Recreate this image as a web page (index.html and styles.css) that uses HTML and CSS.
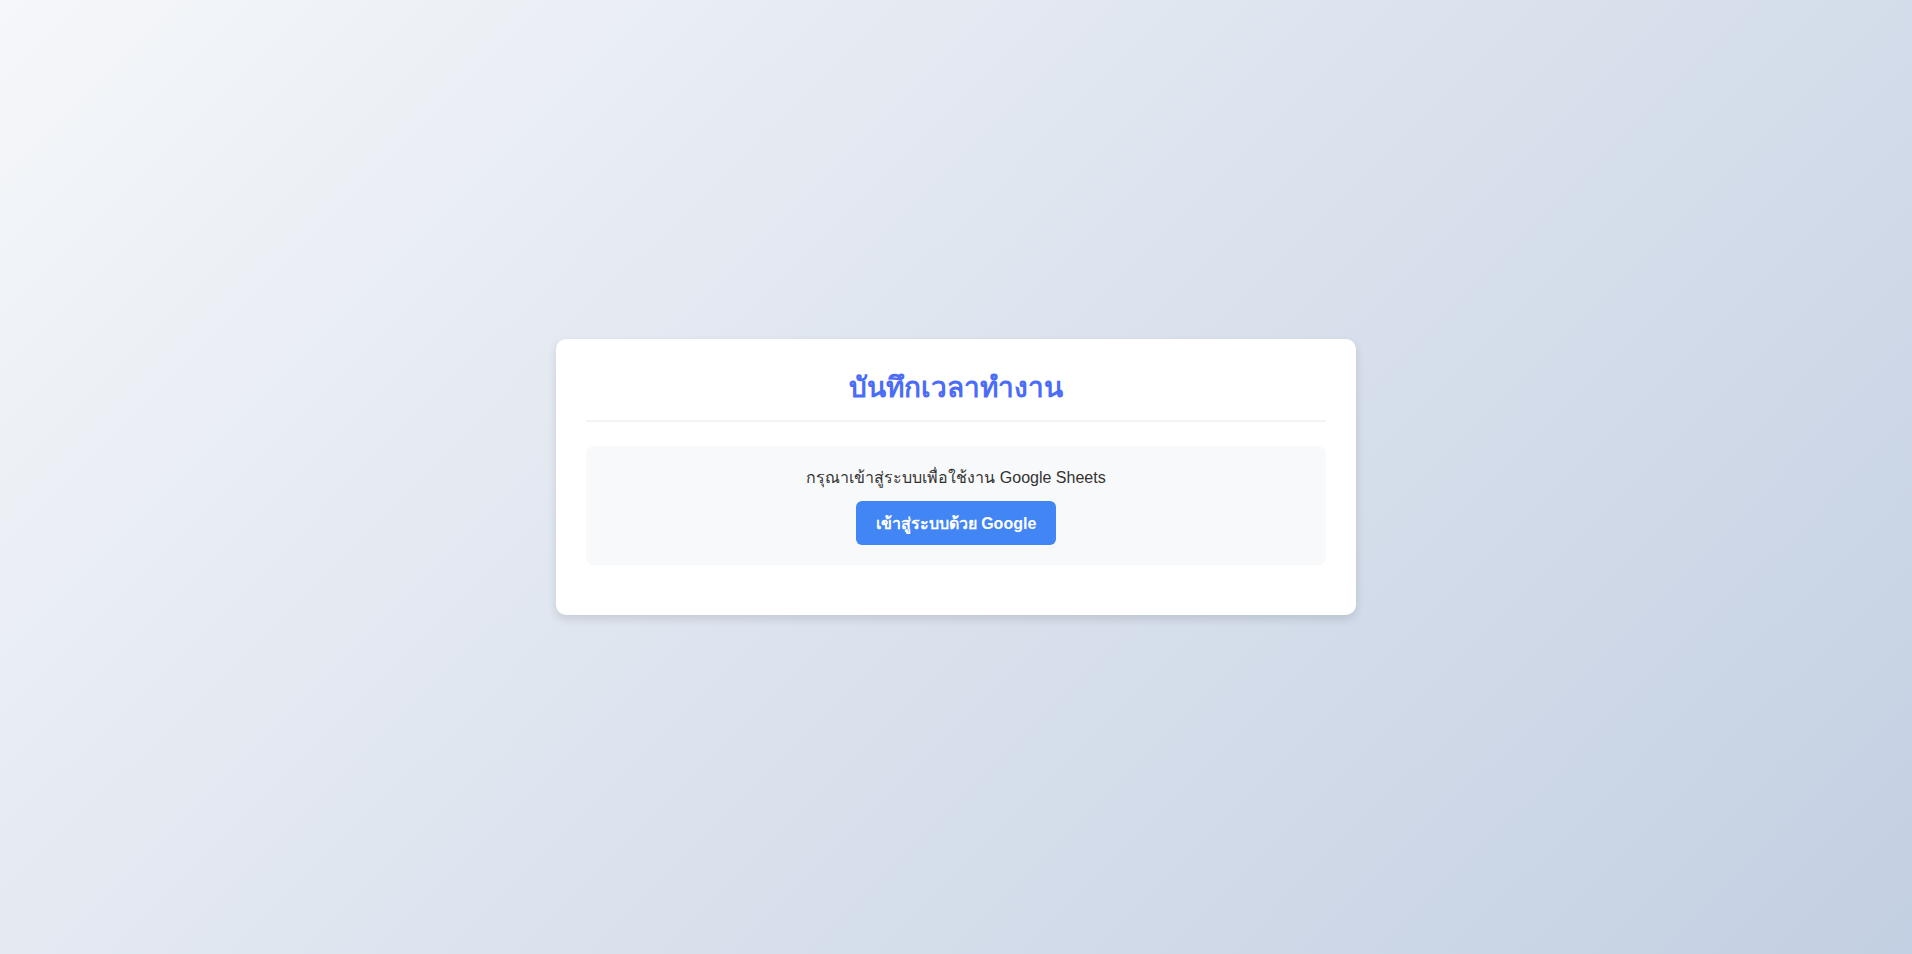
FILE: index.html
```html
<!DOCTYPE html>
<html lang="th">
<head>
<meta charset="utf-8">
<title>บันทึกเวลาทำงาน</title>
<link rel="stylesheet" href="styles.css">
</head>
<body>
  <div class="card">
    <div class="header">
      <h1 class="title">บันทึกเวลาทำงาน</h1>
    </div>
    <div class="login-box">
      <p class="login-text">กรุณาเข้าสู่ระบบเพื่อใช้งาน Google Sheets</p>
      <button class="login-btn">เข้าสู่ระบบด้วย Google</button>
    </div>
  </div>
</body>
</html>
```

FILE: styles.css
```css
html, body {
  margin: 0;
  padding: 0;
}
body {
  min-height: 100vh;
  background: linear-gradient(135deg, #f5f7fa 0%, #c3cfe2 100%);
  font-family: "Liberation Sans", Arial, "Noto Sans", sans-serif;
  display: flex;
  align-items: center;
  justify-content: center;
}
.card {
  width: 800px;
  box-sizing: border-box;
  background: #ffffff;
  border-radius: 10px;
  box-shadow: 0 4px 10px rgba(0, 0, 0, 0.12);
  padding: 30px 30px 50px;
}
.header {
  border-bottom: 2px solid #f2f3f5;
  padding-bottom: 13px;
  margin-bottom: 24px;
  text-align: center;
}
.title {
  margin: 0;
  font-size: 28px;
  line-height: 38px;
  font-weight: bold;
  color: #4a6cf7;
}
.login-box {
  background: #f8f9fa;
  border-radius: 8px;
  padding: 20px;
  display: flex;
  flex-direction: column;
  align-items: center;
  gap: 11px;
}
.login-text {
  margin: 0;
  font-size: 16px;
  line-height: 24px;
  color: #333333;
}
.login-btn {
  font-family: inherit;
  font-size: 16px;
  font-weight: bold;
  color: #ffffff;
  background: #4285f4;
  border: none;
  border-radius: 6px;
  height: 44px;
  padding: 0 20px;
  cursor: pointer;
}
```
